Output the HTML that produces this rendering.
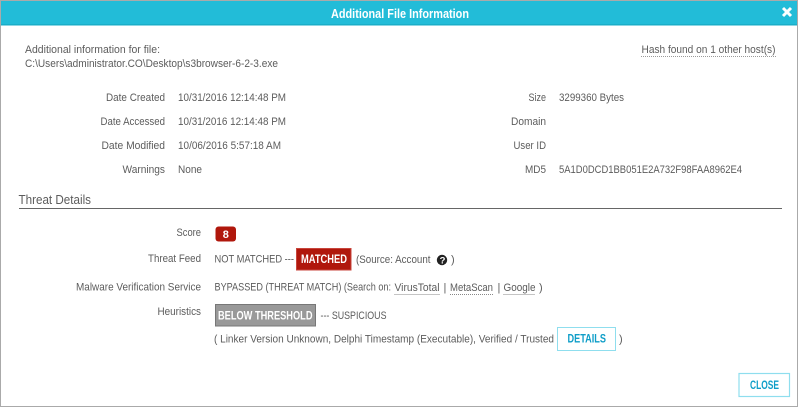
<!DOCTYPE html>
<html><head><meta charset="utf-8">
<style>
html,body{margin:0;padding:0;background:#fff;width:798px;height:407px;overflow:hidden}
svg{display:block;position:absolute;left:0;top:0}
text{font-family:"Liberation Sans",sans-serif;font-size:11px;fill:#5c5c5c}
.b{font-weight:bold;fill:#fff}
.c{font-weight:bold;fill:#0f9ec8}
</style></head><body>
<svg width="798" height="407" viewBox="0 0 798 407">
<rect x="0.5" y="0.5" width="797" height="406" fill="#fff" stroke="#aaa"/>
<rect x="1" y="1" width="796" height="23" fill="#22bcd8"/>
<rect x="1" y="24" width="796" height="1.5" fill="#1aaec8"/>
<text class="b" x="331" y="18" style="font-size:12.5px" textLength="138" lengthAdjust="spacingAndGlyphs">Additional File Information</text>
<path d="M783 8L791 16M791 8L783 16" stroke="#fff" stroke-width="3" fill="none"/>

<text x="25" y="53" textLength="135" lengthAdjust="spacingAndGlyphs">Additional information for file:</text>
<text x="25" y="67" textLength="253" lengthAdjust="spacingAndGlyphs">C:\Users\administrator.CO\Desktop\s3browser-6-2-3.exe</text>
<text x="641.5" y="53" textLength="134" lengthAdjust="spacingAndGlyphs">Hash found on 1 other host(s)</text>
<line x1="641" y1="56.5" x2="776" y2="56.5" stroke="#999" stroke-dasharray="1 1"/>

<text x="106" y="101" textLength="59" lengthAdjust="spacingAndGlyphs">Date Created</text>
<text x="178" y="101" textLength="108" lengthAdjust="spacingAndGlyphs">10/31/2016 12:14:48 PM</text>
<text x="100.5" y="125" textLength="64.5" lengthAdjust="spacingAndGlyphs">Date Accessed</text>
<text x="178" y="125" textLength="108" lengthAdjust="spacingAndGlyphs">10/31/2016 12:14:48 PM</text>
<text x="101.5" y="149" textLength="63.5" lengthAdjust="spacingAndGlyphs">Date Modified</text>
<text x="178" y="149" textLength="103" lengthAdjust="spacingAndGlyphs">10/06/2016 5:57:18 AM</text>
<text x="122.5" y="173" textLength="42.5" lengthAdjust="spacingAndGlyphs">Warnings</text>
<text x="178" y="173" textLength="24" lengthAdjust="spacingAndGlyphs">None</text>

<text x="528.5" y="101" textLength="17.5" lengthAdjust="spacingAndGlyphs">Size</text>
<text x="559" y="101" textLength="65" lengthAdjust="spacingAndGlyphs">3299360 Bytes</text>
<text x="511" y="125" textLength="35" lengthAdjust="spacingAndGlyphs">Domain</text>
<text x="513.5" y="149" textLength="32.5" lengthAdjust="spacingAndGlyphs">User ID</text>
<text x="525" y="173" textLength="21" lengthAdjust="spacingAndGlyphs">MD5</text>
<text x="559" y="173" textLength="183" lengthAdjust="spacingAndGlyphs">5A1D0DCD1BB051E2A732F98FAA8962E4</text>

<text x="18.5" y="204" style="font-size:12.5px" textLength="72.5" lengthAdjust="spacingAndGlyphs">Threat Details</text>
<rect x="19" y="208" width="763" height="1" fill="#666"/>

<text x="176.5" y="236" textLength="24.5" lengthAdjust="spacingAndGlyphs">Score</text>
<rect x="215.5" y="226.5" width="20.5" height="15" rx="3" fill="#b0170c"/>
<text class="b" x="222.8" y="238">8</text>

<text x="148" y="262" textLength="53" lengthAdjust="spacingAndGlyphs">Threat Feed</text>
<text x="214.5" y="262.5" textLength="79.5" lengthAdjust="spacingAndGlyphs">NOT MATCHED ---</text>
<rect x="296.5" y="248.5" width="54.5" height="21.5" fill="#b0170c" stroke="#c8453c"/>
<text class="b" x="301" y="263" style="font-size:11.5px" textLength="46" lengthAdjust="spacingAndGlyphs">MATCHED</text>
<text x="356" y="263" textLength="74.5" lengthAdjust="spacingAndGlyphs">(Source: Account</text>
<circle cx="442" cy="260" r="5.2" fill="#222"/>
<text x="439.6" y="263.4" style="font-size:9.5px;font-weight:bold;fill:#fff">?</text>
<text x="451" y="263">)</text>

<text x="76" y="290.5" textLength="125" lengthAdjust="spacingAndGlyphs">Malware Verification Service</text>
<text x="214.5" y="290.5" textLength="176.5" lengthAdjust="spacingAndGlyphs">BYPASSED (THREAT MATCH) (Search on:</text>
<text x="394.5" y="291" textLength="45" lengthAdjust="spacingAndGlyphs">VirusTotal</text>
<line x1="394.5" y1="294.5" x2="439.5" y2="294.5" stroke="#888" stroke-dasharray="1 1"/>
<text x="443.5" y="291">|</text>
<text x="450" y="291" textLength="43" lengthAdjust="spacingAndGlyphs">MetaScan</text>
<line x1="450" y1="294.5" x2="493" y2="294.5" stroke="#888" stroke-dasharray="1 1"/>
<text x="497.5" y="291">|</text>
<text x="503.5" y="291" textLength="32" lengthAdjust="spacingAndGlyphs">Google</text>
<line x1="503.5" y1="294.5" x2="535" y2="294.5" stroke="#888" stroke-dasharray="1 1"/>
<text x="539" y="291">)</text>

<text x="157.5" y="315" textLength="43.5" lengthAdjust="spacingAndGlyphs">Heuristics</text>
<rect x="215.5" y="304.5" width="100" height="21.5" fill="#999" stroke="#777"/>
<text class="b" x="218" y="319.5" style="font-size:11.5px" textLength="94.5" lengthAdjust="spacingAndGlyphs">BELOW THRESHOLD</text>
<text x="320.5" y="319" textLength="66" lengthAdjust="spacingAndGlyphs">--- SUSPICIOUS</text>

<text x="214" y="342.5" textLength="340" lengthAdjust="spacingAndGlyphs">( Linker Version Unknown, Delphi Timestamp (Executable), Verified / Trusted</text>
<rect x="557.5" y="327.5" width="58" height="23" fill="#fff" stroke="#8fdeee"/>
<text class="c" x="567.5" y="342.5" style="font-size:11.5px" textLength="38.5" lengthAdjust="spacingAndGlyphs">DETAILS</text>
<text x="619" y="342.5">)</text>

<rect x="739" y="373.5" width="50.5" height="23" fill="#fff" stroke="#8fdeee" stroke-width="1.2"/>
<text class="c" x="750" y="389" style="font-size:11.5px" textLength="29" lengthAdjust="spacingAndGlyphs">CLOSE</text>
</svg>
</body></html>
